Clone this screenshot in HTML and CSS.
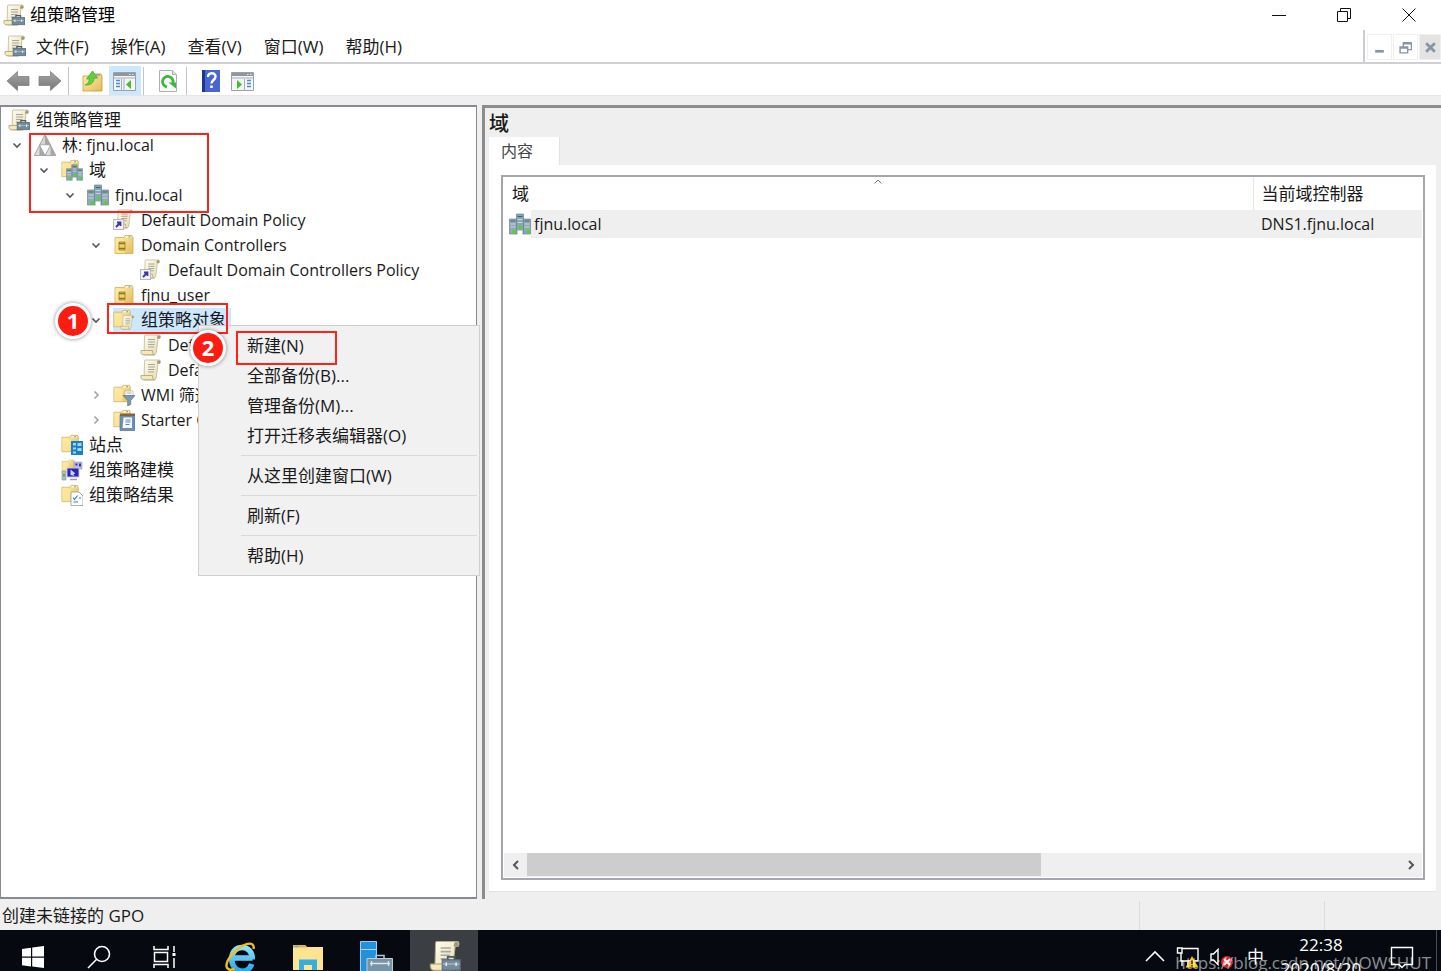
FILE: index.html
```html
<!DOCTYPE html>
<html lang="zh-CN">
<head>
  <meta charset="UTF-8" />
  <meta name="viewport" content="width=device-width, initial-scale=1.0" />
  <title>组策略管理</title>
  <link rel="stylesheet" href="styles.css">
</head>
<body>
  <!-- icon sprite -->
  <svg class="sprite" aria-hidden="true">
    <defs>
      <linearGradient id="paper" x1="0" y1="0" x2="1" y2="1">
        <stop offset="0" stop-color="#fffdf0" />
        <stop offset="1" stop-color="#e4d9a6" />
      </linearGradient>
      <linearGradient id="gold" x1="0" y1="0" x2="1" y2="1">
        <stop offset="0" stop-color="#fff0b4" />
        <stop offset="1" stop-color="#e3bb57" />
      </linearGradient>
      <linearGradient id="metal" x1="0" y1="0" x2="0" y2="1">
        <stop offset="0" stop-color="#a6a6a6" />
        <stop offset="1" stop-color="#777" />
      </linearGradient>
      <linearGradient id="ieblue" x1="0" y1="0" x2="0" y2="1">
        <stop offset="0" stop-color="#8fe0fb" />
        <stop offset="1" stop-color="#2aa5e6" />
      </linearGradient>
    </defs>
    <symbol id="scroll" viewBox="0 0 22 22">
      <path d="M5 1h14.500c1.400 0 1.500 3.500 0 3.500H18L16.500 17c-.2 2.500-1 4-3 4H4L4.500 3C4.500 2 4.600 1.500 5 1z" fill="url(#paper)" stroke="#b5ad8b" stroke-width=".7" />
      <path d="M17 4.500c0-2 .6-3.300 1.900-3.300s2 3.300.4 3.300z" fill="#a1977a" />
      <path d="M1 16.500h11.500c0 2 .6 4.300 2 4.300H3c-1.600 0-2.300-2-2-4.300z" fill="#f3e9bd" stroke="#a79e78" stroke-width=".8" />
      <path d="M8 5.500h7M8 8h7M8 10.500h6.500M8 13h6" stroke="#a8a6a2" stroke-width="1.100" />
    </symbol>
    <symbol id="toolbox" viewBox="0 0 14 11">
      <path d="M4.500 3V1h5v2" fill="none" stroke="#4b5b66" stroke-width="1.200" />
      <rect x=".5" y="3" width="13" height="7.500" fill="#748b9b" stroke="#536978" stroke-width=".8" />
      <path d="M1 6h12" stroke="#a3b4c0" />
      <path d="M3.500 5v2.500M10.500 5v2.500" stroke="#e6edf1" stroke-width="1.100" />
    </symbol>
    <symbol id="console" viewBox="0 0 22 22">
      <use href="#scroll" width="22" height="22" />
      <use href="#toolbox" x="8.500" y="10.500" width="13.500" height="11" />
    </symbol>
    <symbol id="forest" viewBox="0 0 22 22">
      <path d="M11 .5l5.500 10.500h-11z" fill="#d5d5d5" stroke="#8b8b8b" stroke-width=".7" />
      <path d="M11 .5V11h5.500z" fill="#a6a6a6" />
      <path d="M5.500 11L11 21.500H.3z" fill="#dcdcdc" stroke="#8b8b8b" stroke-width=".7" />
      <path d="M16.500 11l5.300 10.500H11z" fill="#dcdcdc" stroke="#8b8b8b" stroke-width=".7" />
      <path d="M5.500 11v10.500H11zM16.500 11v10.500h5.300z" fill="#a6a6a6" />
      <path d="M6.500 11.500h9L11 19.500z" fill="#fff" />
    </symbol>
    <symbol id="folder" viewBox="0 0 22 22">
      <path d="M1 3.500h9l1-2h7l1 2v16H1z" fill="url(#gold)" stroke="#d3ad56" stroke-width=".8" />
      <path d="M11.500 3h6" stroke="#fffbe5" stroke-width="1.400" />
      <path d="M14.500 3h2" stroke="#4a91c8" stroke-width="1" />
      <path d="M1.500 5h7l2 1.500V19h-9z" fill="#ffe9a0" opacity=".7" />
    </symbol>
    <symbol id="domain" viewBox="0 0 22 22">
      <path d="M7.500 1h7v20h-7z" fill="#87a5b3" stroke="#6b8490" stroke-width=".7" />
      <path d="M.5 6h7v15h-7zM14.500 6h7v15h-7z" fill="#8faab7" stroke="#6b8490" stroke-width=".7" />
      <path d="M8.500 3.500h5M1.500 8h5M15.500 8h5" stroke="#4a6270" stroke-width="1.200" />
      <path d="M8.500 6.500h5M8.500 9.500h5M1.500 11h5M1.500 14h5M15.500 11h5M15.500 14h5" stroke="#c3d5de" stroke-width="1" />
      <path d="M8.500 17.500h5V22h-5z" fill="#fff" />
      <path d="M10 13h3.500v3H10zM3.500 17.500h4V20.500h-4zM17.500 17.500h3.500v3h-3.500z" fill="#55d22b" />
    </symbol>
    <symbol id="folder-domain" viewBox="0 0 22 22">
      <use href="#folder" width="20" height="20" />
      <use href="#domain" x="5" y="5" width="17" height="17" />
    </symbol>
    <symbol id="link" viewBox="0 0 22 22">
      <use href="#scroll" x="1" width="20" height="20" />
      <rect x=".5" y="10.500" width="10" height="10" fill="#f1f1f6" stroke="#b6b6c4" />
      <path d="M3 18l4-4M4 13.500h3.500V17" fill="none" stroke="#3b379b" stroke-width="1.800" />
    </symbol>
    <symbol id="ou" viewBox="0 0 22 22">
      <use href="#folder" x="1" width="22" height="22" />
      <path d="M6 8h6v8H6z" fill="#ecd36f" stroke="#a98b34" stroke-width="1" />
      <path d="M6 9.500h6M6 14.500h6" stroke="#8f7322" stroke-width="1.500" />
    </symbol>
    <symbol id="folder-scroll" viewBox="0 0 22 22">
      <use href="#folder" width="20" height="20" />
      <use href="#scroll" x="7" y="6" width="15" height="15" />
    </symbol>
    <symbol id="folder-filter" viewBox="0 0 22 22">
      <use href="#folder" width="20" height="20" />
      <path d="M12 7h8v5h-8z" fill="#fff" stroke="#aaa" stroke-width=".6" />
      <path d="M13.500 9h5" stroke="#999" stroke-width=".8" />
      <path d="M10 11.500h12l-4.300 5v4l-3 1.500v-5.500z" fill="#7b9bb2" stroke="#5b788c" stroke-width=".7" />
    </symbol>
    <symbol id="folder-starter" viewBox="0 0 22 22">
      <use href="#folder" width="20" height="20" />
      <path d="M7 6h15v15.500H7z" fill="#6c8fb5" stroke="#56749a" stroke-width=".7" />
      <path d="M7 4.500h15V7H7z" fill="#8c5f45" />
      <path d="M10.500 8.500h8.500V19H9.500z" fill="#f3f8fd" />
      <path d="M12.500 11h5M12.500 13h5M12.500 15.500h4" stroke="#5f86b2" stroke-width="1" />
    </symbol>
    <symbol id="folder-sites" viewBox="0 0 22 22">
      <use href="#folder" width="20" height="20" />
      <path d="M10 7h12v14H10z" fill="#1b7fc6" />
      <path d="M12 9h3v2.500h-3zM16.500 9h4v3h-4zM12 13.500h3v2h-3zM16.500 14h4v3h-4zM12 17.500h3v2h-3z" fill="#9fd8f8" />
    </symbol>
    <symbol id="folder-model" viewBox="0 0 22 22">
      <use href="#folder" width="16" height="15" />
      <path d="M1 12h4v9H1z" fill="#b5bbbf" stroke="#8f979c" stroke-width=".6" />
      <path d="M2 15h2v2.500H2z" fill="#3fc61f" />
      <path d="M13 3h8v7h-8z" fill="#b9bcdb" stroke="#9598b8" stroke-width=".6" />
      <path d="M14.500 4.500h2v2h-2zM18 4.500h2v3h-2z" fill="#3b37a0" />
      <path d="M6 9h12v9H6z" fill="#2a23b3" stroke="#c6cad0" stroke-width="1" />
      <path d="M9.500 10.500l5 4-2 .5 1 2-4-1z" fill="#cfd0f5" />
      <path d="M9 20.500h7" stroke="#9aa0a5" stroke-width="1.500" />
    </symbol>
    <symbol id="folder-result" viewBox="0 0 22 22">
      <use href="#folder" width="20" height="20" />
      <path d="M10 8h8l4 4v9.500H10z" fill="#fff" stroke="#93999d" stroke-width=".8" />
      <path d="M12 13.500l1.500 2 3-4M12.500 18h4.500M18 14h2" fill="none" stroke="#3a7eb8" stroke-width="1.100" />
    </symbol>
    <symbol id="pane" viewBox="0 0 24 20">
      <path d="M.5.5h22v18H.5z" fill="#f4f5f6" stroke="#9ba1a6" />
      <path d="M1 1h21v3H1z" fill="#8e979e" />
      <path d="M16 2.500h1.500M19 2.500h1.500" stroke="#e6e9eb" />
      <path d="M1 6h21" stroke="#a6acb1" />
    </symbol>
    <symbol id="down" viewBox="0 0 18 18">
      <path d="M5.500 7.500L9 11l3.500-3.500" fill="none" stroke="#555" stroke-width="1.600" />
    </symbol>
    <symbol id="right" viewBox="0 0 18 18">
      <path d="M7.500 5.500L11 9l-3.500 3.500" fill="none" stroke="#a0a0a0" stroke-width="1.500" />
    </symbol>
  </svg>

  <div class="desktop">
    <header class="titlebar">
      <svg class="icon"><use href="#console" /></svg>
      <h1>组策略管理</h1>
      <div class="window-buttons">
        <button type="button" aria-label="最小化"><svg viewBox="0 0 14 14"><path d="M0 7.500h14" /></svg></button>
        <button type="button" aria-label="还原"><svg viewBox="0 0 14 14"><path d="M.5 3.500h10v10H.5zM3.500 3.500v-3h10v10h-3" /></svg></button>
        <button type="button" aria-label="关闭"><svg viewBox="0 0 14 14"><path d="M.5.5l13 13M13.500.5l-13 13" /></svg></button>
      </div>
    </header>

    <nav class="menubar">
      <svg class="icon"><use href="#console" /></svg>
      <div class="menus">
        <button type="button">文件(F)</button>
        <button type="button">操作(A)</button>
        <button type="button">查看(V)</button>
        <button type="button">窗口(W)</button>
        <button type="button">帮助(H)</button>
      </div>
      <div class="child-buttons">
        <button type="button" aria-label="最小化子窗口"><svg viewBox="0 0 12 12"><path d="M2 9.500h8" stroke-width="2.500" /></svg></button>
        <button type="button" aria-label="还原子窗口"><svg viewBox="0 0 12 12"><path d="M1 5.500h7V11H1zM4 5V1.500h7.500V8H8M1 6.500h7M4 2.500h7" stroke-width="1.300" /></svg></button>
        <button type="button" class="shaded" aria-label="关闭子窗口"><svg viewBox="0 0 12 12"><path d="M2 2l8 8M10 2l-8 8" stroke-width="2.600" /></svg></button>
      </div>
    </nav>

    <div class="toolbar">
      <button type="button" aria-label="后退"><svg viewBox="0 0 24 22"><path d="M1 11L11.500 1.500v5H23v9H11.500v5z" fill="url(#metal)" stroke="#808080" stroke-width=".8" /></svg></button>
      <button type="button" aria-label="前进"><svg viewBox="0 0 24 22"><path d="M23 11L12.500 1.500v5H1v9h11.500v5z" fill="url(#metal)" stroke="#808080" stroke-width=".8" /></svg></button>
      <span class="divider"></span>
      <button type="button" aria-label="上移一级"><svg viewBox="0 0 24 22"><path d="M2 6h8l1-2h9l1 2v15H2z" fill="url(#gold)" stroke="#c59b3d" stroke-width=".8" /><path d="M15 5h4" stroke="#4a91c8" /><path d="M4 15c3-1 4-3 4.500-6H5.500l6-8 5 7h-3.300c-.5 5-3.500 7.500-9.200 7z" fill="#5fcf3a" stroke="#41a524" stroke-width=".7" /></svg></button>
      <button type="button" class="pressed" aria-label="显示/隐藏控制台树"><svg viewBox="0 0 24 22"><use href="#pane" y="2" width="24" height="20" /><path d="M8.500 9v12M11 9v12" stroke="#a7adb2" /><path d="M3 10.500h4M3 13.500h4M3 16.500h4" stroke="#4d8bc9" stroke-width="1.500" /><path d="M18 10v9l-5-4.500z" fill="#43bd28" /></svg></button>
      <span class="divider"></span>
      <button type="button" aria-label="刷新"><svg viewBox="0 0 24 22"><path d="M3.500.5h13l4 4v17h-17z" fill="#fafafa" stroke="#b0b0b0" /><path d="M16.500.5v4h4" fill="#ddd" stroke="#b0b0b0" /><path d="M11 17a5.300 5.300 0 1 1 6-4" fill="none" stroke="#3cb83c" stroke-width="2.800" /><path d="M12.500 12.500h7.500v6z" fill="#3cb83c" /></svg></button>
      <span class="divider"></span>
      <button type="button" aria-label="帮助"><svg viewBox="0 0 24 22"><path d="M3 0h18v22H3z" fill="#4a67cf" /><path d="M3 0h3v22H3z" fill="#1d3791" /><path d="M9 7c0-5 7.500-5 7.500-.5 0 3.500-4 3.500-4 7" fill="none" stroke="#fff" stroke-width="2.400" /><path d="M11.200 15.500h2.600V18h-2.600z" fill="#fff" /></svg></button>
      <button type="button" aria-label="显示/隐藏操作窗格"><svg viewBox="0 0 24 22"><use href="#pane" y="2" width="24" height="20" /><path d="M13.500 9v12" stroke="#a7adb2" /><path d="M16 10.500h4M16 13.500h4M16 16.500h4" stroke="#4d8bc9" stroke-width="1.500" /><path d="M6 10v9l5-4.500z" fill="#43bd28" /></svg></button>
    </div>

    <main class="workspace">
      <section class="tree-pane">
        <ul class="tree">
          <li class="root"><svg class="icon"><use href="#console" /></svg><span class="cjk">组策略管理</span></li>
          <li class="level-1"><svg class="toggle"><use href="#down" /></svg><svg class="icon"><use href="#forest" /></svg><span>林: fjnu.local</span></li>
          <li class="level-2"><svg class="toggle"><use href="#down" /></svg><svg class="icon"><use href="#folder-domain" /></svg><span class="cjk">域</span></li>
          <li class="level-3"><svg class="toggle"><use href="#down" /></svg><svg class="icon"><use href="#domain" /></svg><span>fjnu.local</span></li>
          <li class="level-4"><i class="toggle"></i><svg class="icon"><use href="#link" /></svg><span>Default Domain Policy</span></li>
          <li class="level-4"><svg class="toggle"><use href="#down" /></svg><svg class="icon"><use href="#ou" /></svg><span>Domain Controllers</span></li>
          <li class="level-5"><i class="toggle"></i><svg class="icon"><use href="#link" /></svg><span>Default Domain Controllers Policy</span></li>
          <li class="level-4"><i class="toggle"></i><svg class="icon"><use href="#ou" /></svg><span>fjnu_user</span></li>
          <li class="level-4 selected"><svg class="toggle"><use href="#down" /></svg><svg class="icon"><use href="#folder-scroll" /></svg><span class="cjk">组策略对象</span></li>
          <li class="level-5"><i class="toggle"></i><svg class="icon"><use href="#scroll" /></svg><span>Default Domain Controllers Policy</span></li>
          <li class="level-5"><i class="toggle"></i><svg class="icon"><use href="#scroll" /></svg><span>Default Domain Policy</span></li>
          <li class="level-4"><svg class="toggle"><use href="#right" /></svg><svg class="icon"><use href="#folder-filter" /></svg><span>WMI 筛选器</span></li>
          <li class="level-4"><svg class="toggle"><use href="#right" /></svg><svg class="icon"><use href="#folder-starter" /></svg><span>Starter GPO</span></li>
          <li class="level-2"><i class="toggle"></i><svg class="icon"><use href="#folder-sites" /></svg><span class="cjk">站点</span></li>
          <li class="level-2"><i class="toggle"></i><svg class="icon"><use href="#folder-model" /></svg><span class="cjk">组策略建模</span></li>
          <li class="level-2"><i class="toggle"></i><svg class="icon"><use href="#folder-result" /></svg><span class="cjk">组策略结果</span></li>
        </ul>

        <div class="context-menu">
          <button type="button">新建(N)</button>
          <button type="button">全部备份(B)...</button>
          <button type="button">管理备份(M)...</button>
          <button type="button">打开迁移表编辑器(O)</button>
          <hr>
          <button type="button">从这里创建窗口(W)</button>
          <hr>
          <button type="button">刷新(F)</button>
          <hr>
          <button type="button">帮助(H)</button>
        </div>

        <div class="mark mark-forest"></div>
        <div class="mark mark-objects"></div>
        <div class="mark mark-new"></div>
        <span class="step step-1">1</span>
        <span class="step step-2">2</span>
      </section>

      <section class="detail-pane">
        <h2>域</h2>
        <button type="button" class="tab">内容</button>
        <div class="tab-page">
          <div class="list">
            <svg class="sort" viewBox="0 0 8 5"><path d="M.5 4.500L4 1l3.500 3.500" fill="none" stroke="#777" /></svg>
            <table>
              <thead>
                <tr><th>域</th><th class="controller">当前域控制器</th></tr>
              </thead>
              <tbody>
                <tr><td><div class="cell"><svg class="icon"><use href="#domain" /></svg><span>fjnu.local</span></div></td><td class="controller">DNS1.fjnu.local</td></tr>
              </tbody>
            </table>
            <div class="scrollbar">
              <button type="button" aria-label="向左滚动"><svg viewBox="0 0 10 10"><path d="M7 1L3 5l4 4" /></svg></button>
              <div class="track"><div class="thumb"></div></div>
              <button type="button" aria-label="向右滚动"><svg viewBox="0 0 10 10"><path d="M3 1l4 4-4 4" /></svg></button>
            </div>
          </div>
        </div>
      </section>
    </main>

    <div class="statusbar">
      <span class="message">创建未链接的 GPO</span>
      <span class="slot"></span>
      <span class="slot last"></span>
    </div>

    <footer class="taskbar">
      <div class="system">
        <button type="button" aria-label="开始"><svg viewBox="0 0 34 34"><path d="M6 9l9-1.300V16.500H6zM16.200 7.500L28 6v10.500H16.200zM6 17.700h9v8.800L6 25.200zM16.200 17.700H28V28l-11.800-1.500z" fill="#fff" /></svg></button>
        <button type="button" aria-label="搜索"><svg viewBox="0 0 34 34"><g fill="none" stroke="#fff" stroke-width="1.600"><circle cx="20" cy="14" r="7.500" /><path d="M14.700 19.300L6 28" /></g></svg></button>
        <button type="button" aria-label="任务视图"><svg viewBox="0 0 34 34"><g fill="none" stroke="#fff" stroke-width="1.500"><path d="M6 6v3.500h14V6M6 28v-3.500h14V28M6.500 12.500h13v9h-13zM26 6v6M26 18v10" /></g><path d="M24.500 13h3v3h-3z" fill="#fff" /></svg></button>
      </div>
      <div class="apps">
        <button type="button" aria-label="Internet Explorer"><svg viewBox="0 0 34 34"><path d="M8 18h20.500M28.300 19.500c.7-15.500-20.300-16-20.600-1 0 15.500 17.300 16 20 5.500" fill="none" stroke="url(#ieblue)" stroke-width="5.500" /><path d="M8 16.800h18v3.400H8z" fill="#5cc4f2" /><path d="M29.500 9c2-10-13-5-22 6-8 10-6 17 3 14" fill="none" stroke="#f0bd23" stroke-width="2.400" /></svg></button>
        <button type="button" aria-label="文件资源管理器"><svg viewBox="0 0 34 34"><path d="M2 5h12l2 2h16v23H2z" fill="#fde492" /><path d="M2 5h12l2 2.500H2z" fill="#e7b33f" /><path d="M4 6.500h3" stroke="#54b7e8" stroke-width="1.500" /><path d="M8 30V19.500h18V30h-5v-5h-8v5z" fill="#35afe2" /></svg></button>
        <button type="button" aria-label="服务器管理器"><svg viewBox="0 0 34 34"><path d="M1.500 1.500h16v32h-16z" fill="#2491dc" stroke="#9bd0f3" /><path d="M2 9.500h15" stroke="#a8d7f6" /><path d="M17 18v-2.500h8V18" fill="none" stroke="#b6c4ce" stroke-width="1.500" /><path d="M8 18.500h25.500V33H8z" fill="#7893a6" stroke="#c0ccd5" /><path d="M11 23.500h20M12.500 21v5M29.500 21v5" stroke="#dce6ec" stroke-width="1.300" /></svg></button>
        <button type="button" class="active" aria-label="组策略管理"><svg viewBox="0 0 34 34"><use href="#console" x="2" y="0" width="32" height="32" /></svg></button>
      </div>
      <div class="tray">
        <button type="button" aria-label="显示隐藏的图标"><svg viewBox="0 0 24 24"><path d="M3 16l9-9 9 9" fill="none" stroke="#fff" stroke-width="1.600" /></svg></button>
        <button type="button" aria-label="网络"><svg viewBox="0 0 24 24"><path d="M5.500 3.500H22v12.500H5V8M1.500 3h4.500v5h-4.500zM12 16v4M6 16v5" fill="none" stroke="#fff" stroke-width="1.400" /><path d="M16 11l6.500 11.500h-13z" fill="#f8c51c" /><path d="M16 15v4M16 20v1.500" stroke="#222" stroke-width="1.400" /></svg></button>
        <button type="button" aria-label="音量"><svg viewBox="0 0 24 24"><path d="M2 9h2.500L9 4.500v15L4.500 15H2z" fill="none" stroke="#fff" stroke-width="1.400" /><circle cx="18" cy="17" r="6" fill="#df2230" /><path d="M15 14l6 6M21 14l-6 6" stroke="#fff" stroke-width="1.800" /></svg></button>
        <button type="button" class="ime">中</button>
        <button type="button" class="clock"><span>22:38</span><span>2020/8/20</span></button>
        <button type="button" class="notice" aria-label="通知"><svg viewBox="0 0 24 24"><path d="M1.500 2.500h21v17h-7.500l-3 3-3-3H1.500z" fill="none" stroke="#fff" stroke-width="1.400" /></svg></button>
        <button type="button" class="peek" aria-label="显示桌面"></button>
      </div>
      <span class="watermark">https://blog.csdn.net/NOWSHUT</span>
    </footer>
  </div>
</body>
</html>
```

FILE: styles.css
```css
* {
  box-sizing: border-box;
}
body {
  margin: 0;
  font-family: "Open Sans", "Noto Sans CJK SC", sans-serif;
  font-size: 16px;
  line-height: 24px;
  color: #1a1a1a;
}
button {
  padding: 0;
  border: none;
  background: none;
  font: inherit;
  color: inherit;
}
button svg {
  display: block;
}
.sprite {
  position: absolute;
  width: 0;
  height: 0;
}
.icon {
  flex: none;
  width: 22px;
  height: 22px;
}
.desktop {
  display: flex;
  flex-direction: column;
  height: 100vh;
  overflow: hidden;
  background: #efefef;
}

/* title bar */
.titlebar {
  display: flex;
  align-items: center;
  height: 30px;
  padding-left: 3px;
  gap: 5px;
  background: #fff;
}
.titlebar h1 {
  margin: 0;
  font-size: 17px;
  font-weight: 400;
  color: #000;
}
.window-buttons {
  display: flex;
  margin-left: auto;
}
.window-buttons button {
  display: flex;
  justify-content: center;
  width: 65px;
}
.window-buttons svg {
  width: 14px;
  height: 14px;
  fill: none;
  stroke: #111;
}

/* menu bar */
.menubar {
  display: flex;
  align-items: center;
  height: 34px;
  padding-left: 4px;
  gap: 10px;
  background: #fff;
  border-bottom: 2px solid #cfd0d3;
}
.menus {
  display: flex;
  gap: 22px;
  padding-top: 2px;
  font-size: 17px;
}
.child-buttons {
  display: flex;
  align-items: center;
  align-self: stretch;
  margin-left: auto;
  padding: 2px 0 0 2px;
  gap: 1px;
  border-left: 2px solid #c9ccd1;
}
.child-buttons button {
  display: flex;
  align-items: center;
  justify-content: center;
  width: 25px;
  height: 26px;
  border: 1px solid #f0f0f0;
}
.child-buttons .shaded {
  width: 22px;
  background: #e3e3e3;
}
.child-buttons svg {
  width: 13px;
  height: 13px;
  fill: none;
  stroke: #8796a5;
}

/* toolbar */
.toolbar {
  display: flex;
  align-items: center;
  height: 32px;
  padding: 2px 0 0 2px;
  background: #fff;
  border-bottom: 1px solid #e6e6e6;
}
.toolbar button {
  display: flex;
  align-items: center;
  justify-content: center;
  width: 32px;
  height: 29px;
}
.toolbar .pressed {
  background: #cce8ff;
}
.toolbar svg {
  width: 24px;
  height: 22px;
}
.divider {
  width: 1px;
  height: 28px;
  margin: 0 8px 0 2px;
  background: #c4c4c4;
}

/* workspace */
.workspace {
  display: flex;
  flex: 1;
  min-height: 0;
  padding-top: 9px;
  gap: 5px;
}
.tree-pane {
  position: relative;
  flex: 0 0 477px;
  background: #fff;
  border: 1px solid #868a93;
  border-width: 2px 1px 2px 1px;
}
.tree {
  margin: 0;
  padding: 0;
  list-style: none;
}
.tree li {
  display: flex;
  align-items: center;
  height: 25px;
  padding-left: 7px;
  white-space: nowrap;
}
.tree .level-2 {
  padding-left: 34px;
}
.tree .level-3 {
  padding-left: 60px;
}
.tree .level-4 {
  padding-left: 86px;
}
.tree .level-5 {
  padding-left: 113px;
}
.tree span {
  padding: 0 5px 0 6px;
}
.tree .cjk {
  font-size: 17px;
}
.toggle {
  flex: none;
  width: 18px;
  height: 18px;
  margin-right: 8px;
}
.tree .selected span {
  margin-left: -22px;
  padding-left: 28px;
  background: #cce8ff;
}
.tree .selected .icon {
  position: relative;
  z-index: 1;
}
.context-menu {
  position: absolute;
  z-index: 2;
  top: 218px;
  left: 197px;
  width: 282px;
  padding: 5px 2px 4px;
  background: #f1f1f1;
  border: 1px solid #cfcfcf;
  font-size: 17px;
}
.context-menu button {
  display: block;
  width: 100%;
  height: 30px;
  padding-left: 46px;
  text-align: left;
}
.context-menu hr {
  height: 1px;
  margin: 4px 0 5px 40px;
  border: none;
  background: #d9d9d9;
}

/* tutorial marks */
.mark {
  position: absolute;
  z-index: 3;
  border: 2px solid #fc2319;
}
.mark-forest {
  top: 26px;
  left: 28px;
  width: 180px;
  height: 80px;
}
.mark-objects {
  top: 196px;
  left: 106px;
  width: 121px;
  height: 31px;
}
.mark-new {
  top: 224px;
  left: 235px;
  width: 101px;
  height: 34px;
}
.step {
  position: absolute;
  z-index: 4;
  width: 36px;
  height: 36px;
  border: 3px solid #fff;
  border-radius: 50%;
  background: #fd1c12;
  box-shadow: 0 0 4px rgba(0, 0, 0, 0.45);
  color: #fff;
  font-size: 22px;
  font-weight: 700;
  line-height: 28px;
  text-align: center;
}
.step-1 {
  top: 196px;
  left: 54px;
}
.step-2 {
  top: 223px;
  left: 189px;
}

/* detail pane */
.detail-pane {
  display: flex;
  flex: 1;
  flex-direction: column;
  align-items: flex-start;
  min-width: 0;
  padding: 2px 5px 7px 4px;
  border-top: 3px solid #8c8c8c;
  border-left: 3px solid #8c8c8c;
}
.detail-pane h2 {
  margin: 0;
  font-size: 20px;
  font-weight: 500;
  line-height: 27px;
}
.tab {
  width: 71px;
  height: 28px;
  padding-left: 12px;
  background: #fff;
  border-right: 1px solid #e2e2e2;
  text-align: left;
  color: #444;
}
.tab-page {
  display: flex;
  flex: 1;
  align-self: stretch;
  padding: 10px 11px 11px 12px;
  background: #fff;
  border-bottom: 1px solid #e2e2e2;
}
.list {
  position: relative;
  display: flex;
  flex: 1;
  flex-direction: column;
  padding: 1px;
  border: 2px solid #a5a6ad;
}
.sort {
  position: absolute;
  top: 2px;
  left: 371px;
  width: 8px;
  height: 5px;
}
table {
  width: 100%;
  table-layout: fixed;
  border-collapse: collapse;
}
th {
  height: 32px;
  padding: 0 8px;
  font-size: 17px;
  font-weight: 400;
  text-align: left;
}
td {
  height: 28px;
  padding: 0;
}
.controller {
  width: 169px;
  padding: 0 8px;
}
th.controller {
  border-left: 1px solid #e5e5e5;
}
td.controller {
  background: #efefef;
}
.cell {
  display: flex;
  align-items: center;
  padding-left: 5px;
}
.cell span {
  flex: 1;
  padding: 2px 3px;
  background: #efefef;
}
.scrollbar {
  display: flex;
  height: 24px;
  margin-top: auto;
  background: #efefef;
}
.scrollbar button {
  display: flex;
  align-items: center;
  justify-content: center;
  width: 23px;
}
.scrollbar svg {
  width: 10px;
  height: 10px;
  fill: none;
  stroke: #555;
  stroke-width: 2;
}
.track {
  flex: 1;
}
.thumb {
  width: 59%;
  height: 23px;
  background: #cdcdcd;
}

/* status bar */
.statusbar {
  display: flex;
  align-items: center;
  height: 31px;
  padding: 2px 0 0 2px;
}
.message {
  flex: 1;
  font-size: 17px;
}
.slot {
  align-self: stretch;
  width: 185px;
  border-left: 1px solid #dcdcdc;
}
.slot.last {
  width: 117px;
}

/* taskbar, its lower edge runs off the screen */
.taskbar {
  position: relative;
  display: flex;
  align-items: flex-start;
  height: 41px;
  overflow: hidden;
  background: #060a10;
  color: #fff;
}
.taskbar button {
  display: flex;
  flex: none;
  align-items: center;
  justify-content: center;
  height: 54px;
}
.system,
.apps,
.tray {
  display: flex;
}
.system {
  margin-right: 10px;
}
.system button {
  width: 66px;
}
.apps button {
  width: 68px;
}
.apps button:first-child {
  width: 66px;
}
.taskbar svg {
  width: 34px;
  height: 34px;
}
.taskbar .active {
  background: #3b3e42;
}
.tray {
  margin-left: auto;
}
.tray button {
  width: 33px;
}
.taskbar .tray svg {
  width: 24px;
  height: 24px;
}
.tray .ime {
  width: 37px;
  font-size: 17px;
}
.tray .clock {
  flex-direction: column;
  width: 94px;
  font-size: 17px;
}
.tray .notice {
  width: 68px;
}
.tray .peek {
  width: 5px;
  border-left: 1px solid #4a4d52;
}
.watermark {
  position: absolute;
  right: 10px;
  bottom: -4px;
  font-size: 17px;
  color: rgba(255, 255, 255, 0.55);
}
```
